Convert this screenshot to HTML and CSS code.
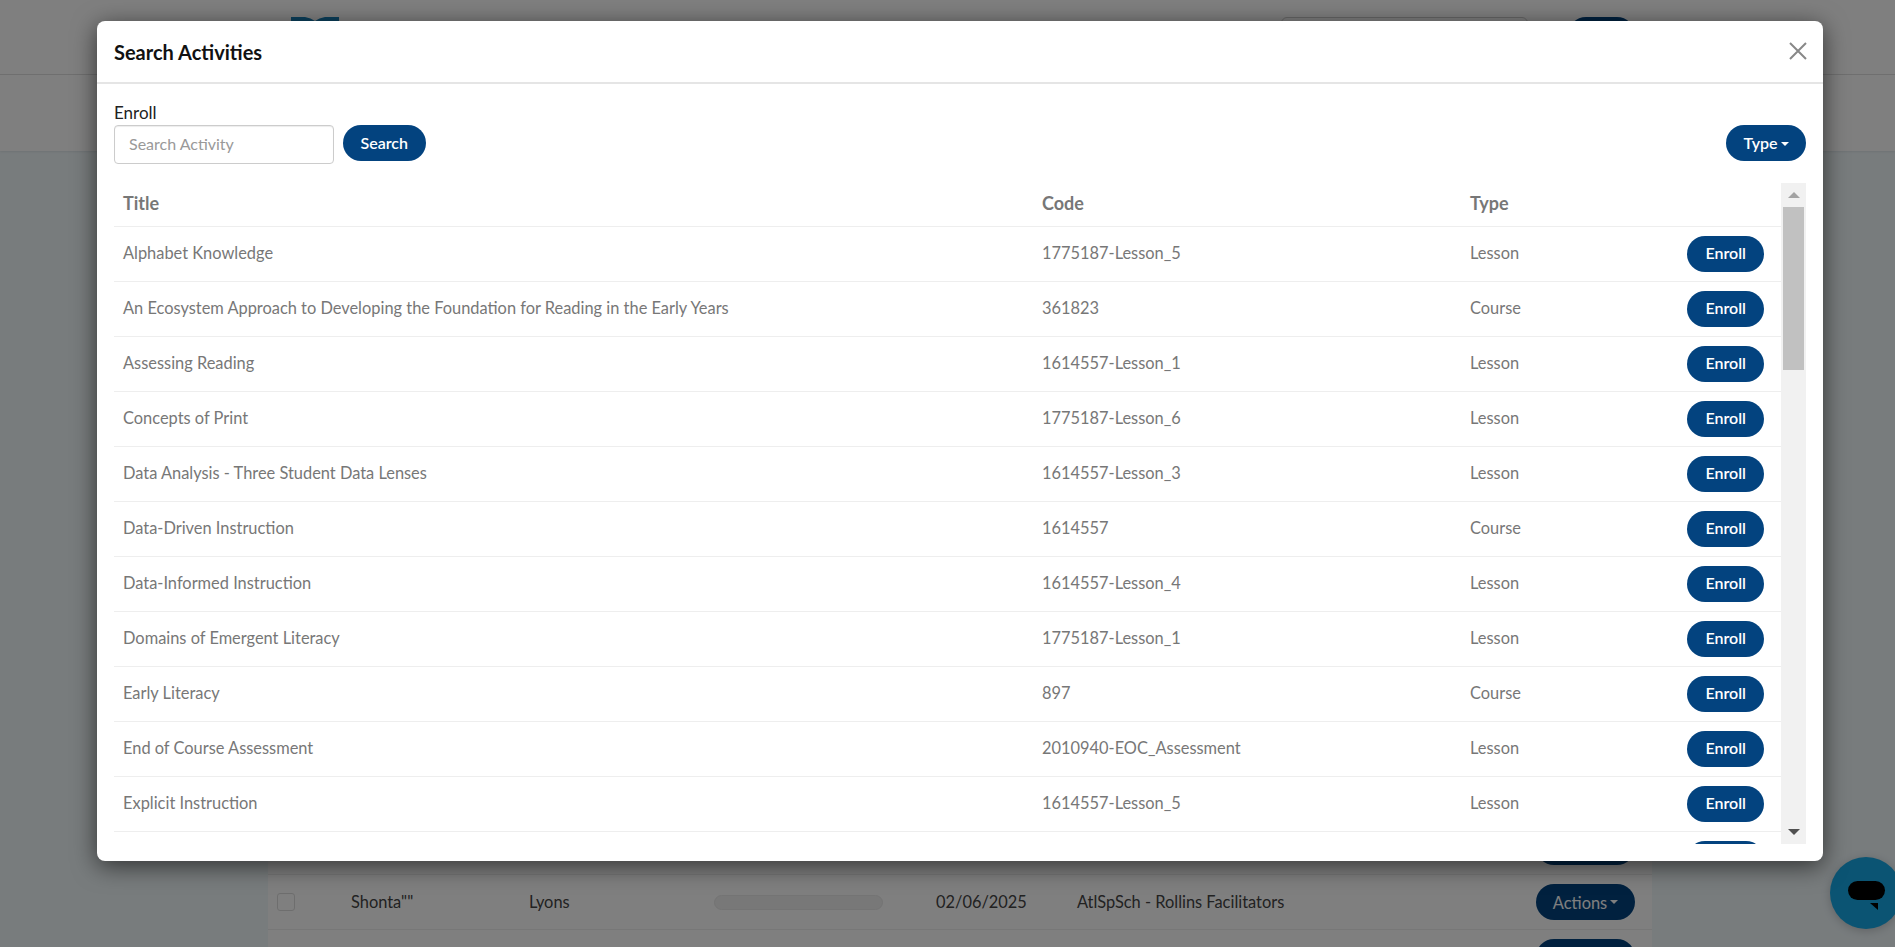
FILE: index.html
```html
<!DOCTYPE html>
<html lang="en">
<head>
<meta charset="utf-8">
<title>Search Activities</title>
<link rel="stylesheet" href="styles.css">
</head>
<body>
<div class="page">
  <header class="topbar">
    <svg class="logo" viewBox="0 0 60 40" aria-hidden="true"><path d="M0 8 L4 5 L6 5 L6 0 Q22 -2 30 4 Q38 -2 54 0 L54 5 L60 5 L60 40 L0 40 Z"/></svg>
    <div class="top-search"></div>
    <div class="top-btn"></div>
  </header>
  <div class="subbar"></div>
  <main class="main">
    <section class="card">
      <div class="bg-row"><span class="bg-actions"></span></div>
      <div class="bg-row">
        <span class="bg-check"></span>
        <span class="bg-first">Shonta""</span>
        <span class="bg-last">Lyons</span>
        <span class="bg-progress"></span>
        <span class="bg-date">02/06/2025</span>
        <span class="bg-group">AtlSpSch - Rollins Facilitators</span>
        <span class="bg-actions">Actions<i class="caret"></i></span>
      </div>
      <div class="bg-row"><span class="bg-actions"></span></div>
    </section>
  </main>
</div>

<div class="chat">
  <svg class="chat-icon" viewBox="0 0 38 30" aria-hidden="true"><rect x="0" y="0" width="37" height="19" rx="9.5"/><path d="M22 22 H30 V29 Z"/></svg>
</div>

<div class="backdrop"></div>

<div class="modal" role="dialog" aria-label="Search Activities">
  <div class="modal-head">
    <h4 class="modal-title">Search Activities</h4>
    <svg class="close" viewBox="0 0 18 18" aria-hidden="true"><path d="M1 1 L17 17 M17 1 L1 17"/></svg>
  </div>
  <div class="modal-body">
    <div class="toolbar">
      <div class="search-group">
        <label class="label" for="q">Enroll</label>
        <div class="search-row">
          <input id="q" class="input" type="text" placeholder="Search Activity">
          <button class="btn">Search</button>
        </div>
      </div>
      <button class="btn btn-type">Type<i class="caret"></i></button>
    </div>
    <div class="results">
      <div class="table-clip">
        <table class="table">
          <thead>
            <tr><th class="c-title">Title</th><th class="c-code">Code</th><th class="c-type">Type</th><th class="c-act"></th></tr>
          </thead>
          <tbody>
            <tr><td>Alphabet Knowledge</td><td>1775187-Lesson_5</td><td>Lesson</td><td class="c-act"><button class="btn">Enroll</button></td></tr>
            <tr><td>An Ecosystem Approach to Developing the Foundation for Reading in the Early Years</td><td>361823</td><td>Course</td><td class="c-act"><button class="btn">Enroll</button></td></tr>
            <tr><td>Assessing Reading</td><td>1614557-Lesson_1</td><td>Lesson</td><td class="c-act"><button class="btn">Enroll</button></td></tr>
            <tr><td>Concepts of Print</td><td>1775187-Lesson_6</td><td>Lesson</td><td class="c-act"><button class="btn">Enroll</button></td></tr>
            <tr><td>Data Analysis - Three Student Data Lenses</td><td>1614557-Lesson_3</td><td>Lesson</td><td class="c-act"><button class="btn">Enroll</button></td></tr>
            <tr><td>Data-Driven Instruction</td><td>1614557</td><td>Course</td><td class="c-act"><button class="btn">Enroll</button></td></tr>
            <tr><td>Data-Informed Instruction</td><td>1614557-Lesson_4</td><td>Lesson</td><td class="c-act"><button class="btn">Enroll</button></td></tr>
            <tr><td>Domains of Emergent Literacy</td><td>1775187-Lesson_1</td><td>Lesson</td><td class="c-act"><button class="btn">Enroll</button></td></tr>
            <tr><td>Early Literacy</td><td>897</td><td>Course</td><td class="c-act"><button class="btn">Enroll</button></td></tr>
            <tr><td>End of Course Assessment</td><td>2010940-EOC_Assessment</td><td>Lesson</td><td class="c-act"><button class="btn">Enroll</button></td></tr>
            <tr><td>Explicit Instruction</td><td>1614557-Lesson_5</td><td>Lesson</td><td class="c-act"><button class="btn">Enroll</button></td></tr>
            <tr><td></td><td></td><td></td><td class="c-act"><button class="btn btn-blank"></button></td></tr>
          </tbody>
        </table>
      </div>
      <div class="scrollbar" aria-hidden="true">
        <span class="arrow arrow-up"></span>
        <span class="thumb"></span>
        <span class="arrow arrow-down"></span>
      </div>
    </div>
  </div>
</div>
</body>
</html>
```

FILE: styles.css
```css
* { box-sizing: border-box; }
html, body { margin: 0; height: 100%; overflow: hidden; }
body { font-family: Lato, "Open Sans", sans-serif; font-size: 16.4px; color: #333; background: #f0f8fb; }

.page { height: 947px; display: flex; flex-direction: column; overflow: hidden; }
.topbar { height: 75px; flex: none; background: #fff; border-bottom: 1px solid #e0e0e0; display: flex; align-items: flex-start; padding: 17px 260px 0 285px; }
.logo { width: 60px; height: 40px; fill: #1680b8; flex: none; }
.top-search { width: 247px; height: 40px; margin-left: auto; border: 1px solid #ccc; border-radius: 6px; }
.top-btn { width: 67px; height: 36px; margin-left: 40px; background: #03437f; border-radius: 18px; }
.subbar { height: 76px; flex: none; background: #fff; box-shadow: 0 1px 2px rgba(0,0,0,.08); }
.main { flex: 1; padding: 669px 243px 0 268px; }
.card { background: #fff; }
.bg-row { height: 55px; display: flex; align-items: center; border-bottom: 1px solid #eee; padding: 0 17px 0 9px; color: #444; }
.bg-check { width: 18px; height: 18px; border: 1px solid #ddd; border-radius: 3px; flex: none; }
.bg-first { width: 178px; margin-left: 56px; flex: none; padding-bottom: 2px; }
.bg-last { width: 185px; flex: none; padding-bottom: 2px; }
.bg-progress { width: 169px; height: 15px; background: #f0f0f0; border: 1px solid #e8e8e8; border-radius: 8px; flex: none; }
.bg-date { margin-left: 53px; width: 141px; flex: none; padding-bottom: 2px; }
.bg-group { flex: none; padding-bottom: 2px; }
.bg-actions { margin-left: auto; width: 99px; height: 36px; border-radius: 18px; background: #03437f; color: #fff; display: flex; align-items: center; justify-content: center; flex: none; }

.caret { display: inline-block; width: 0; height: 0; margin-left: 3px; vertical-align: middle; border-top: 4px solid currentColor; border-left: 4px solid transparent; border-right: 4px solid transparent; }

.chat { position: absolute; left: 1830px; top: 857px; width: 72px; height: 72px; border-radius: 50%; background: #16a9e6; box-shadow: 0 2px 10px rgba(0,0,0,.2); display: flex; padding: 24px 0 0 18px; }
.chat-icon { width: 38px; height: 30px; fill: #000; }

.backdrop { position: absolute; inset: 0; background: rgba(0,0,0,.5); }

.modal { position: absolute; left: 97px; top: 21px; width: 1726px; height: 840px; background: #fff; border-radius: 8px; box-shadow: 0 5px 25px rgba(0,0,0,.6); display: flex; flex-direction: column; }
.modal-head { height: 63px; flex: none; display: flex; align-items: center; justify-content: space-between; padding: 0 16px 0 17px; border-bottom: 2px solid #e5e5e5; }
.modal-title { margin: 0; font-size: 20px; font-weight: 700; color: #111; }
.close { width: 18px; height: 18px; fill: none; stroke: #888; stroke-width: 2; margin-bottom: 2px; }
.modal-body { flex: 1; min-height: 0; display: flex; flex-direction: column; padding: 15px 17px 17px; }

.toolbar { height: 84px; flex: none; display: flex; justify-content: space-between; align-items: flex-start; }
.search-group { display: flex; flex-direction: column; }
.label { font-size: 17px; line-height: 27px; height: 26px; color: #222; }
.search-row { display: flex; align-items: flex-start; gap: 9px; }
.input { width: 220px; height: 39px; border: 1px solid #ccc; border-radius: 4px; padding: 0 14px 2px; font: 16px Lato, sans-serif; color: #555; box-shadow: inset 0 1px 1px rgba(0,0,0,.075); }
.input::placeholder { color: #999; }
.btn { height: 36px; padding: 0 17.5px 2px; border: 0; border-radius: 18px; background: #03437f; color: #fff; font: 600 16px Lato, sans-serif; vertical-align: middle; }
.btn-type { margin-top: 26px; width: 80px; padding: 0 0 2px; }
.btn-blank { width: 77px; }
.table .btn { padding: 0 18px 2px; }

.results { flex: 1; min-height: 0; display: flex; }
.table-clip { flex: 1; min-width: 0; overflow: hidden; }
.table { width: 100%; border-collapse: collapse; table-layout: fixed; color: #777; }
.table th { height: 43px; padding: 0 9px 2px; text-align: left; font-size: 18px; font-weight: 700; border-bottom: 1px solid #eee; }
.table td { height: 55px; padding: 0 9px 2px; border-bottom: 1px solid #eee; }
.c-title { width: 919px; }
.c-code { width: 428px; }
.c-type { width: 217px; }
.table .c-act { padding: 0 17px 0 0; }
.table td.c-act { text-align: right; }

.scrollbar { width: 25px; flex: none; background: #f1f1f1; display: flex; flex-direction: column; align-items: center; padding-top: 9px; }
.arrow { width: 0; height: 0; border-left: 6px solid transparent; border-right: 6px solid transparent; flex: none; }
.arrow-up { border-bottom: 6px solid #a3a3a3; }
.arrow-down { margin-top: auto; margin-bottom: 9px; border-top: 6px solid #505050; }
.thumb { width: 21px; height: 163px; margin-top: 9px; background: #c1c1c1; flex: none; }
```
